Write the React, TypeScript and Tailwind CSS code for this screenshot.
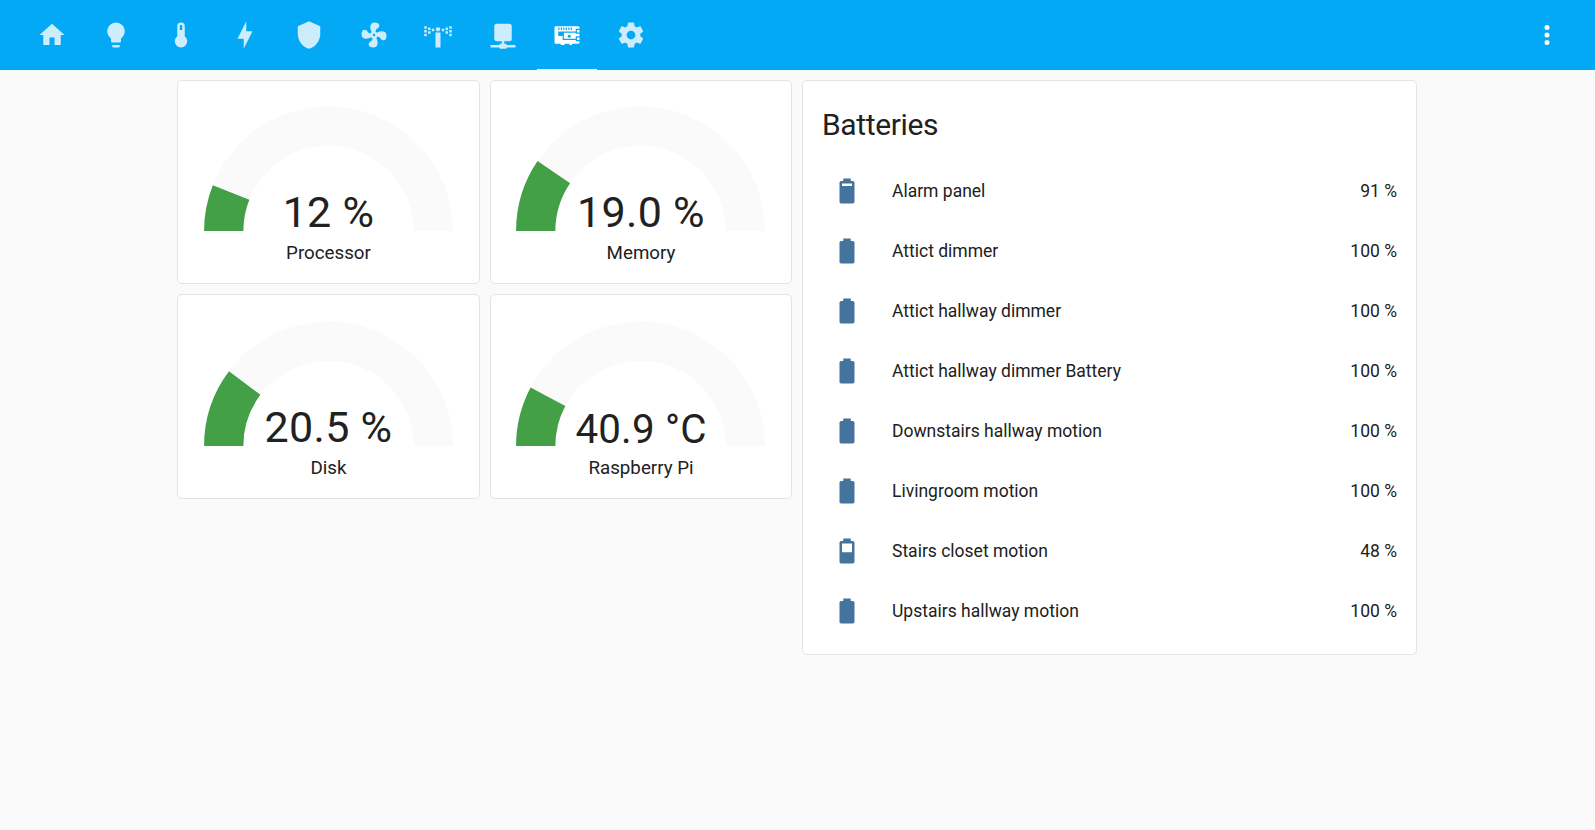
import React from "react";

const TABS: { name: string; path: string }[] = [
  { name: "Home", path: "M10,20V14H14V20H19V12H22L12,3L2,12H5V20H10Z" },
  { name: "Lights", path: "M12,2A7,7 0 0,0 5,9C5,11.38 6.19,13.47 8,14.74V17A1,1 0 0,0 9,18H15A1,1 0 0,0 16,17V14.74C17.81,13.47 19,11.38 19,9A7,7 0 0,0 12,2M9,21A1,1 0 0,0 10,22H14A1,1 0 0,0 15,21V20H9V21Z" },
  { name: "Climate", path: "M15 13V5A3 3 0 0 0 9 5V13A5 5 0 1 0 15 13M12 4A1 1 0 0 1 13 5V8H11V5A1 1 0 0 1 12 4Z" },
  { name: "Energy", path: "M11 15H6L13 1V9H18L11 23V15Z" },
  { name: "Security", path: "M12,1L3,5V11C3,16.55 6.84,21.74 12,23C17.16,21.74 21,16.55 21,11V5L12,1Z" },
  { name: "Ventilation", path: "M12,11A1,1 0 0,0 11,12A1,1 0 0,0 12,13A1,1 0 0,0 13,12A1,1 0 0,0 12,11M12.5,2C17,2 17.11,5.57 14.75,6.75C13.76,7.24 13.32,8.29 13.13,9.22C13.61,9.42 14.03,9.73 14.35,10.13C18.05,8.13 22.03,8.92 22.03,12.5C22.03,17 18.46,17.1 17.28,14.73C16.78,13.74 15.72,13.3 14.79,13.11C14.59,13.59 14.28,14 13.88,14.34C15.87,18.03 15.08,22 11.5,22C7,22 6.91,18.42 9.27,17.24C10.25,16.75 10.69,15.71 10.89,14.79C10.4,14.59 9.97,14.27 9.65,13.87C5.96,15.85 2,15.07 2,11.5C2,7 5.56,6.89 6.74,9.26C7.24,10.25 8.29,10.68 9.22,10.87C9.41,10.39 9.73,9.97 10.14,9.65C8.15,5.96 8.94,2 12.5,2Z" },
  { name: "Sprinkler", path: "M10 10H14V22H10ZM10.3 6H13.7V7.5L13 9H11L10.3 7.5ZM1 5H3V7H1ZM1 8H3V10H1ZM1 11H3V13H1ZM4 6H6V8H4ZM4 9H6V11H4ZM7 7H9V9H7ZM15 7H17V9H15ZM18 6H20V8H18ZM18 9H20V11H18ZM21 5H23V7H21ZM21 8H23V10H21ZM21 11H23V13H21Z" },
  { name: "Network", path: "M17,3A2,2 0 0,1 19,5V15A2,2 0 0,1 17,17H13V19H14A1,1 0 0,1 15,20H22V22H15A1,1 0 0,1 14,23H10A1,1 0 0,1 9,22H2V20H9A1,1 0 0,1 10,19H11V17H7C5.89,17 5,16.1 5,15V5A2,2 0 0,1 7,3H17Z" },
  { name: "System", path: "M3 5H21A1 1 0 0 1 22 6V18A1 1 0 0 1 21 19H16V20H14V19H10V20H7V19H3A1 1 0 0 1 2 18V6A1 1 0 0 1 3 5ZM5 6V8H6V6ZM7 6V8H8V6ZM9 6V8H10V6ZM11 6V8H12V6ZM13 6V8H14V6ZM15 6V8H16V6ZM5 9.2H19V10.2H9.5V15H19V16H8.5V12.8H5ZM12.6 12V14H15V12ZM19 7H22V8H20V10H22V11H19ZM19 13H22V14H20V16H22V17H19Z" },
  { name: "Settings", path: "M12,15.5A3.5,3.5 0 0,1 8.5,12A3.5,3.5 0 0,1 12,8.5A3.5,3.5 0 0,1 15.5,12A3.5,3.5 0 0,1 12,15.5M19.43,12.97C19.47,12.65 19.5,12.33 19.5,12C19.5,11.67 19.47,11.34 19.43,11L21.54,9.37C21.73,9.22 21.78,8.95 21.66,8.73L19.66,5.27C19.54,5.05 19.27,4.96 19.05,5.05L16.56,6.05C16.04,5.66 15.5,5.32 14.87,5.07L14.5,2.42C14.46,2.18 14.25,2 14,2H10C9.75,2 9.54,2.18 9.5,2.42L9.13,5.07C8.5,5.32 7.96,5.66 7.44,6.05L4.95,5.05C4.73,4.96 4.46,5.05 4.34,5.27L2.34,8.73C2.21,8.95 2.27,9.22 2.46,9.37L4.57,11C4.53,11.34 4.5,11.67 4.5,12C4.5,12.33 4.53,12.65 4.57,12.97L2.46,14.63C2.27,14.78 2.21,15.05 2.34,15.27L4.34,18.73C4.46,18.95 4.73,19.03 4.95,18.95L7.44,17.94C7.96,18.34 8.5,18.68 9.13,18.93L9.5,21.58C9.54,21.82 9.75,22 10,22H14C14.25,22 14.46,21.82 14.5,21.58L14.87,18.93C15.5,18.67 16.04,18.34 16.56,17.94L19.05,18.95C19.27,19.03 19.54,18.95 19.66,18.73L21.66,15.27C21.78,15.05 21.73,14.78 21.54,14.63L19.43,12.97Z" },
];

const ACTIVE_TAB = "System";

const BATTERY =
  "M16.67,4H15V2H9V4H7.33A1.33,1.33 0 0,0 6,5.33V20.67C6,21.4 6.6,22 7.33,22H16.67A1.33,1.33 0 0,0 18,20.67V5.33C18,4.6 17.4,4 16.67,4Z";

const BATTERIES = [
  { name: "Alarm panel", level: 91 },
  { name: "Attict dimmer", level: 100 },
  { name: "Attict hallway dimmer", level: 100 },
  { name: "Attict hallway dimmer Battery", level: 100 },
  { name: "Downstairs hallway motion", level: 100 },
  { name: "Livingroom motion", level: 100 },
  { name: "Stairs closet motion", level: 48 },
  { name: "Upstairs hallway motion", level: 100 },
];

function batteryPath(level: number) {
  if (level > 95) return BATTERY;
  if (level > 85) return BATTERY + "M16,8H8V6H16Z";
  return BATTERY + "M16,13H8V6H16Z";
}

function Icon({ path }: { path: string }) {
  return (
    <svg viewBox="0 0 24 24" className="size-[30px] shrink-0" fill="currentColor" fillRule="evenodd">
      <path d={path} />
    </svg>
  );
}

function Header() {
  return (
    <header className="flex h-[70px] items-stretch justify-between bg-[#03a9f4] pl-[22px] pr-[18px] text-white">
      <nav className="flex gap-[4.37px]">
        {TABS.map((tab) => {
          const active = tab.name === ACTIVE_TAB;
          return (
            <button
              key={tab.name}
              aria-label={tab.name}
              className={
                active
                  ? "flex w-[60px] items-center justify-center border-b border-white pt-px"
                  : "flex w-[60px] items-center justify-center"
              }
            >
              <span className={active ? "" : "opacity-80"}>
                <Icon path={tab.path} />
              </span>
            </button>
          );
        })}
      </nav>
      <button aria-label="Menu" className="flex w-[60px] items-center justify-center">
        <Icon path="M12,16A2,2 0 0,1 14,18A2,2 0 0,1 12,20A2,2 0 0,1 10,18A2,2 0 0,1 12,16M12,10A2,2 0 0,1 14,12A2,2 0 0,1 12,14A2,2 0 0,1 10,12A2,2 0 0,1 12,10M12,4A2,2 0 0,1 14,6A2,2 0 0,1 12,8A2,2 0 0,1 10,6A2,2 0 0,1 12,4Z" />
      </button>
    </header>
  );
}

function Gauge({ value, label, angle, small }: { value: string; label: string; angle: number; small?: boolean }) {
  const rad = (angle * Math.PI) / 180;
  const x = -40 * Math.cos(rad);
  const y = -40 * Math.sin(rad);
  return (
    <div className="flex h-[204.4px] flex-col items-center rounded-[5px] border border-[#e4e4e4] bg-white pt-[19.2px]">
      <div className="relative flex h-[130px] w-[263px] flex-col">
        <svg viewBox="-50 -50 100 50" className="-ml-[0.4px] block h-[131px] w-[263px] shrink-0" fill="none" strokeWidth="15">
          <path d="M -40 0 A 40 40 0 0 1 40 0" stroke="#fafafa" />
          <path d={`M -40 0 A 40 40 0 0 1 ${x} ${y}`} stroke="#43a047" />
        </svg>
        <div
          className={
            small
              ? "absolute inset-x-0 bottom-[-9.8px] text-center text-[40.3px] leading-[48px] tracking-[0.2px] whitespace-nowrap"
              : "absolute inset-x-0 bottom-[-6px] text-center text-[43px] leading-[48px] tracking-[0.3px] whitespace-nowrap"
          }
        >
          {value}
        </div>
      </div>
      <div className="mt-[11.2px] text-[18.75px] leading-6">{label}</div>
    </div>
  );
}

export default function App() {
  return (
    <div className="min-h-screen bg-[#fafafa] font-['Roboto',sans-serif] text-[#212121]">
      <Header />
      <main className="flex items-start justify-center gap-[10px] pt-[10px] pr-px">
        <section className="grid w-[615px] grid-cols-[303px_302px] gap-[10px]">
          <Gauge value="12 %" label="Processor" angle={21.6} />
          <Gauge value="19.0 %" label="Memory" angle={34.2} />
          <Gauge value="20.5 %" label="Disk" angle={36.9} />
          <Gauge value="40.9 °C" label="Raspberry Pi" angle={28} small />
        </section>
        <section className="h-[575px] w-[615px] rounded-[5px] border border-[#e4e4e4] bg-white pr-[19px] pl-[19px]">
          <h1 className="pt-[19px] text-[30px] leading-[50px] tracking-[-0.36px]">Batteries</h1>
          <ul className="mt-[11px]">
            {BATTERIES.map((b) => (
              <li key={b.name} className="flex h-[60px] items-center text-[17.5px]">
                <span className="flex w-[50px] justify-center text-[#44739e]">
                  <Icon path={batteryPath(b.level)} />
                </span>
                <span className="ml-5 flex-1">{b.name}</span>
                <span>{b.level} %</span>
              </li>
            ))}
          </ul>
        </section>
      </main>
    </div>
  );
}
